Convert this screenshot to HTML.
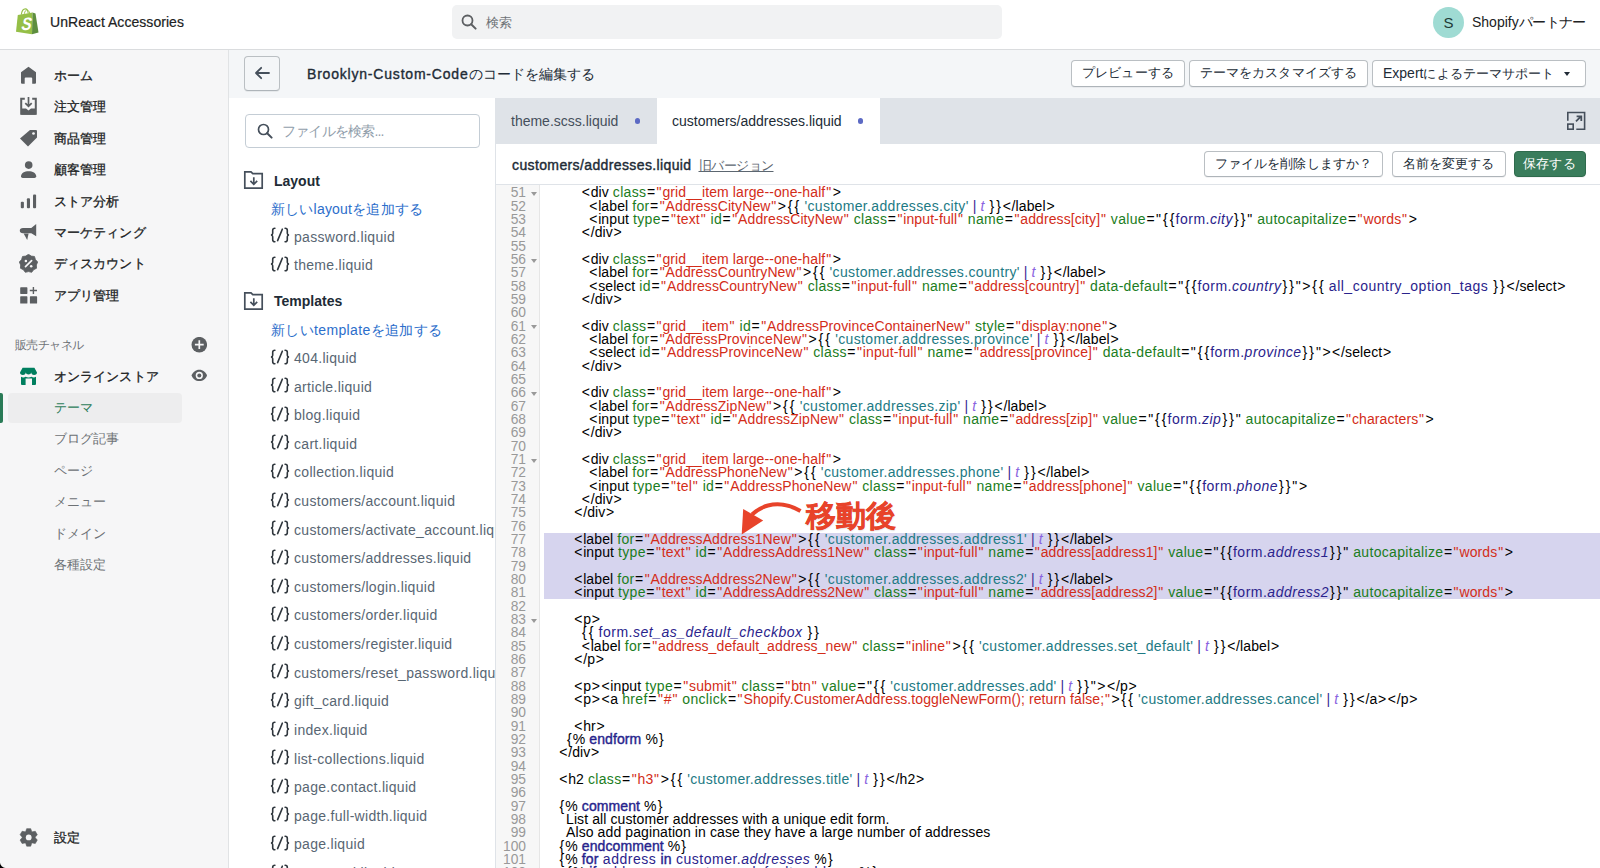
<!DOCTYPE html>
<html><head><meta charset="utf-8">
<style>
*{box-sizing:border-box;margin:0;padding:0}
html,body{width:1600px;height:868px;overflow:hidden;background:#fff;font-family:"Liberation Sans",sans-serif;color:#202223}
.abs{position:absolute}
/* top bar */
#top{position:absolute;left:0;top:0;width:1600px;height:50px;background:#fff;border-bottom:1px solid #dadcde;box-shadow:0 1px 1px rgba(0,0,0,.03)}
#search{position:absolute;left:452px;top:5px;width:550px;height:34px;background:#f1f2f3;border-radius:5px}
#search .txt{position:absolute;left:34px;top:9px;font-size:13px;color:#6d7175}
#avatar{position:absolute;left:1433px;top:6.5px;width:31px;height:31px;border-radius:50%;background:#9fdbd3;color:#1f3a36;font-size:15px;text-align:center;line-height:31px}
/* sidebar */
#side{position:absolute;left:0;top:50px;width:229px;height:818px;background:#f6f6f7;border-right:1px solid #e1e3e5}
.nav{position:absolute;left:54px;font-size:13px;font-weight:normal;-webkit-text-stroke:0.3px #202223;letter-spacing:0.1px;color:#202223;line-height:16px;margin-top:0.7px}
.sub{position:absolute;left:54px;font-size:13px;color:#6d7175;line-height:16px;letter-spacing:0.1px;margin-top:0.5px}
.ico{position:absolute;left:19px;width:20px;height:20px}
/* main header */
#hdr{position:absolute;left:229px;top:50px;width:1371px;height:48px;background:#f4f6f8}
.btn{position:absolute;height:27px;background:#fff;border:1px solid #babfc3;border-bottom-color:#aeb4b9;border-radius:4px;box-shadow:0 1px 0 rgba(22,29,37,.05);font-size:13px;color:#212b36;line-height:24px;text-align:center;white-space:nowrap;letter-spacing:0.05px}
/* file panel */
#files{position:absolute;left:229px;top:98px;width:266px;height:770px;background:#fff;overflow:hidden}
.fi{position:absolute;left:294px;font-size:14px;color:#586673;white-space:nowrap;line-height:16px;letter-spacing:0.3px}
.fi b{font-weight:normal;color:#212b36;font-size:14px;margin-right:4px}
/* editor */
#tabs{position:absolute;left:495px;top:98px;width:1105px;height:46px;background:#dfe3e8}
#edhdr{position:absolute;left:495px;top:144px;width:1105px;height:41px;background:#fff;border-bottom:1px solid #dfe3e8}
#edleft{position:absolute;left:495px;top:98px;width:1px;height:770px;background:#dfe3e8}
#gutter{position:absolute;left:496px;top:185px;width:44px;height:683px;background:#f7f7f7;border-right:1px solid #e6e6e6}
.ln{position:absolute;left:496px;width:30px;text-align:right;font-size:13.8px;color:#999;line-height:13.334px;height:13.334px}
.fold{position:absolute;left:531px;width:0;height:0;border-left:3.5px solid transparent;border-right:3.5px solid transparent;border-top:4px solid #999}
.cl{position:absolute;font-size:14px;line-height:13.334px;white-space:pre;color:#000;letter-spacing:0.1px}
.cl .a{color:#1b7d22;letter-spacing:0.33px}
.cl .s{color:#d32c18}
.cl .q{color:#1d7a84;letter-spacing:0.35px}
.cl .p{color:#3b2a94}
.cl .f{color:#8a63e0;font-style:italic}
.cl .v{color:#2a238c;letter-spacing:0.5px}
.cl .vi{color:#2a238c;font-style:italic;letter-spacing:0.5px}
.cl .k{color:#2a1f8f;-webkit-text-stroke:0.4px #24238a}
.cl i{font-style:inherit}
.cl .x1{padding:0 0.8px}
.cl .x2{padding:0 1.0px}
.cl .x3{padding:0 0.7px}
.cl .x4{padding:0 0.55px}
#hl{position:absolute;left:544px;top:532.8px;width:1056px;height:66.2px;background:#d6d4ee}
</style></head><body>

<!-- TOP BAR -->
<div id="top">
  <svg class="abs" style="left:15px;top:8px" width="25" height="28" viewBox="0 0 25 28">
    <path d="M2.8 7 L17.5 4.5 L17 26.2 L1 23.8 Z" fill="#95bf47"/>
    <path d="M17.5 4.5 L20.5 5.5 L23.5 24.5 L17 26.2 Z" fill="#5e8e3e"/>
    <path d="M6.3 6.8 C6.8 3 8.6 0.9 10.4 0.9 C12 0.9 12.9 2.4 13.2 5.2" fill="none" stroke="#95bf47" stroke-width="1.1"/>
    <path d="M9.3 5.8 C9.8 3.2 11 1.6 12.2 1.8" fill="none" stroke="#95bf47" stroke-width="0.9"/>
    <path d="M12.5 2.3 C13.6 2.5 14.3 3.5 14.6 5" fill="none" stroke="#95bf47" stroke-width="0.9"/>
    <text x="0" y="0" transform="translate(5.6 22) skewX(-14) scale(0.82 1)" font-family="Liberation Sans" font-weight="bold" font-size="18" fill="#fff">S</text>
  </svg>
  <div class="abs" style="left:50px;top:14px;font-size:14px;color:#202223;letter-spacing:0.05px;-webkit-text-stroke:0.2px #202223">UnReact Accessories</div>
  <div id="search">
    <svg class="abs" style="left:9px;top:9px" width="16" height="16" viewBox="0 0 16 16"><circle cx="6.5" cy="6.5" r="5" fill="none" stroke="#5c5f62" stroke-width="1.8"/><path d="M10.2 10.2 L14.6 14.6" stroke="#5c5f62" stroke-width="2" stroke-linecap="round"/></svg>
    <div class="txt">検索</div>
  </div>
  <div id="avatar">S</div>
  <div class="abs" style="left:1472px;top:14px;font-size:14px;color:#202223">Shopify<span style="letter-spacing:-0.6px">パートナー</span></div>
</div>

<!-- SIDEBAR -->
<div id="side"></div>
<svg class="ico" style="top:65px" viewBox="0 0 20 20"><path d="M9.5 1.7 L17 7.3 V17.7 Q17 18.7 16 18.7 H13.2 V13.5 Q13.2 12.5 12.2 12.5 H6.7 Q5.7 12.5 5.7 13.5 V18.7 H3 Q2 18.7 2 17.7 V7.3 Z" fill="#5c5f62"/></svg>
<svg class="ico" style="top:96px" viewBox="0 0 20 20"><path d="M5.8 2.7 H2.2 V17.8 H16.8 V2.7 H13.2" fill="none" stroke="#5c5f62" stroke-width="2"/><path d="M2.2 12.6 H7 L9.5 14.6 L12 12.6 H16.8 V18.8 H2.2 Z" fill="#5c5f62"/><path d="M9.5 1 V10.3 M6.3 7.2 L9.5 10.4 L12.7 7.2" stroke="#5c5f62" stroke-width="1.7" fill="none"/></svg>
<svg class="ico" style="top:128px" viewBox="0 0 20 20"><path d="M11 2 H17 Q18 2 18 3 V9.5 L9 18.5 L1 10.5 Z" fill="#5c5f62"/><circle cx="14.5" cy="5.5" r="1.35" fill="#f6f6f7"/></svg>
<svg class="ico" style="top:159px" viewBox="0 0 20 20"><circle cx="9.7" cy="6.1" r="3.8" fill="#5c5f62"/><path d="M2 17.3 C2 14.2 5.5 12.3 9.6 12.3 C13.7 12.3 17.2 14.2 17.2 17.3 Q17.2 19.1 15.5 19.1 H3.7 Q2 19.1 2 17.3 Z" fill="#5c5f62"/></svg>
<svg class="ico" style="top:191px" viewBox="0 0 20 20"><rect x="1.8" y="10.8" width="3.1" height="6.4" rx="1" fill="#5c5f62"/><rect x="7.9" y="7.2" width="3.1" height="10" rx="1" fill="#5c5f62"/><rect x="14" y="3.6" width="3.1" height="13.6" rx="1" fill="#5c5f62"/></svg>
<svg class="ico" style="top:222px" viewBox="0 0 20 20"><path d="M17.2 1.9 V14.3 L12.3 11.2 H4 Q0.8 11.2 0.8 8.6 Q0.8 6 4 6 H12.3 Z" fill="#5c5f62"/><path d="M4.6 11.6 H9.6 L8.2 18 Z" fill="#5c5f62"/></svg>
<svg class="ico" style="top:254px" viewBox="0 0 20 20"><path d="M9.50 0.30 L12.24 2.08 L15.48 2.48 L16.43 5.60 L18.66 7.99 L17.38 10.99 L17.55 14.25 L14.64 15.73 L12.68 18.34 L9.50 17.60 L6.32 18.34 L4.36 15.73 L1.45 14.25 L1.62 10.99 L0.34 7.99 L2.57 5.60 L3.52 2.48 L6.76 2.08Z" fill="#5c5f62" stroke="#5c5f62" stroke-width="0.8" stroke-linejoin="round"/><path d="M12.6 6.6 L6.5 12.6" stroke="#f6f6f7" stroke-width="1.7" stroke-linecap="round"/><circle cx="6.9" cy="7" r="1.25" fill="#f6f6f7"/><circle cx="12.2" cy="12.3" r="1.25" fill="#f6f6f7"/></svg>
<svg class="ico" style="top:286px" viewBox="0 0 20 20"><rect x="1.2" y="1.3" width="7.2" height="6.6" rx="0.6" fill="#5c5f62"/><rect x="1.2" y="10.3" width="7.2" height="7.3" rx="0.6" fill="#5c5f62"/><rect x="10.9" y="10.3" width="7.2" height="7.3" rx="0.6" fill="#5c5f62"/><path d="M14.4 0.9 V8.1 M10.8 4.5 H18" stroke="#5c5f62" stroke-width="1.4"/></svg>
<div class="nav" style="top:67px">ホーム</div>
<div class="nav" style="top:98px">注文管理</div>
<div class="nav" style="top:130px">商品管理</div>
<div class="nav" style="top:161px">顧客管理</div>
<div class="nav" style="top:193px">ストア分析</div>
<div class="nav" style="top:224px">マーケティング</div>
<div class="nav" style="top:255px">ディスカウント</div>
<div class="nav" style="top:287px">アプリ管理</div>
<div class="abs" style="left:15px;top:337px;font-size:12px;color:#6d7175;letter-spacing:-0.6px">販売チャネル</div>
<svg class="abs" style="left:191px;top:337px" width="16" height="16" viewBox="0 0 16 16"><circle cx="8.3" cy="7.7" r="7.8" fill="#5c5f62"/><path d="M8.3 3.3 V12.1 M3.9 7.7 H12.7" stroke="#f6f6f7" stroke-width="1.7"/></svg>
<svg class="ico" style="top:366px" viewBox="0 0 20 20"><path d="M3.6 1.8 H15.4 L18 6.6 A2.85 2.35 0 0 1 12.3 6.6 A2.85 2.35 0 0 1 6.7 6.6 A2.85 2.35 0 0 1 1 6.6 Z" fill="#007f5f"/><path d="M2 10.8 Q4.3 12 6.6 10.8 Q9.5 12.3 12.5 10.8 Q14.8 12 17 10.8 V17.9 Q17 18.9 16 18.9 H13 V12.6 H6.6 V18.9 H3 Q2 18.9 2 17.9 Z" fill="#007f5f"/></svg>
<div class="nav" style="top:368px">オンラインストア</div>
<svg class="abs" style="left:191px;top:368px" width="16" height="14" viewBox="0 0 16 14"><path d="M8.3 1.7 C4.5 1.7 1.8 4.3 0.6 7.4 C1.8 10.5 4.5 13.1 8.3 13.1 C12.1 13.1 14.8 10.5 16 7.4 C14.8 4.3 12.1 1.7 8.3 1.7 Z" fill="#5c5f62"/><circle cx="8.3" cy="7.4" r="3.6" fill="#f6f6f7"/><circle cx="8.3" cy="7.4" r="2" fill="#5c5f62"/></svg>
<div class="abs" style="left:8px;top:393px;width:174px;height:30px;background:#ededee;border-radius:4px"></div>
<div class="abs" style="left:0;top:393px;width:3px;height:30px;background:#2a7b57;border-radius:0 2px 2px 0"></div>
<div class="sub" style="top:399px;color:#2e7d5b">テーマ</div>
<div class="sub" style="top:430px">ブログ記事</div>
<div class="sub" style="top:462px">ページ</div>
<div class="sub" style="top:493px">メニュー</div>
<div class="sub" style="top:525px">ドメイン</div>
<div class="sub" style="top:556px">各種設定</div>
<svg class="ico" style="top:828px" viewBox="0 0 20 20"><path d="M6.72 3.51 L7.68 0.63 L11.72 0.63 L12.68 3.51 L13.31 3.87 L16.28 3.26 L18.31 6.77 L16.29 9.04 L16.29 9.76 L18.31 12.03 L16.28 15.54 L13.31 14.93 L12.68 15.29 L11.72 18.17 L7.68 18.17 L6.72 15.29 L6.09 14.93 L3.12 15.54 L1.09 12.03 L3.11 9.76 L3.11 9.04 L1.09 6.77 L3.12 3.26 L6.09 3.87Z" fill="#5c5f62" stroke="#5c5f62" stroke-width="0.6" stroke-linejoin="round"/><circle cx="9.7" cy="9.4" r="2.9" fill="#f6f6f7"/></svg>
<div class="nav" style="top:829px">設定</div>

<!-- MAIN HEADER -->
<div id="hdr"></div>
<div class="abs" style="left:244px;top:56px;width:36px;height:35px;border:1px solid #babfc3;border-bottom-color:#aeb4b9;border-radius:4px;background:#f4f6f8;box-shadow:0 1px 0 rgba(22,29,37,.06)"></div>
<svg class="abs" style="left:253px;top:64px" width="18" height="18" viewBox="0 0 18 18"><path d="M16 9 H3.2 M8.2 3.8 L3 9 L8.2 14.2" stroke="#454f5b" stroke-width="1.8" fill="none" stroke-linecap="round" stroke-linejoin="round"/></svg>
<div class="abs" style="left:307px;top:66px;font-size:14px;color:#212b36;white-space:nowrap"><span style="letter-spacing:0.8px;-webkit-text-stroke:0.35px #212b36">Brooklyn-Custom-Code</span>のコードを編集する</div>
<div class="btn" style="left:1071px;top:60px;width:114px;height:27px">プレビューする</div>
<div class="btn" style="left:1189px;top:60px;width:179px;height:27px">テーマをカスタマイズする</div>
<div class="btn" style="left:1372px;top:60px;width:214px;height:27px;text-align:left;padding-left:10px"><span style="letter-spacing:0;font-size:14px">Expert</span>によるテーマサポート<span style="position:absolute;left:191px;top:11px;width:0;height:0;border-left:3.5px solid transparent;border-right:3.5px solid transparent;border-top:4px solid #212b36"></span></div>

<!-- FILE PANEL -->
<div id="files"></div>
<div class="abs" style="left:245px;top:114px;width:235px;height:34px;border:1px solid #c4cdd5;border-radius:4px"></div>
<svg class="abs" style="left:257px;top:123px" width="16" height="16" viewBox="0 0 16 16"><circle cx="6.5" cy="6.5" r="5" fill="none" stroke="#454f5b" stroke-width="1.7"/><path d="M10.2 10.2 L14.6 14.6" stroke="#454f5b" stroke-width="2" stroke-linecap="round"/></svg>
<div class="abs" style="left:282px;top:123px;font-size:14px;color:#919eab;letter-spacing:-0.8px">ファイルを検索...</div>
<svg class="abs" style="left:243px;top:170px" width="21" height="20" viewBox="0 0 21 20"><path d="M1.8 1.8 H8 L9.8 3.6 H19.2 V18.2 H1.8 Z" fill="none" stroke="#454f5b" stroke-width="1.7"/><path d="M10.8 7.2 V14.2 M7.4 10.9 L10.8 14.3 L14.2 10.9" stroke="#454f5b" stroke-width="1.7" fill="none"/></svg>
<div class="abs" style="left:274px;top:172.5px;font-size:14px;font-weight:bold;color:#212b36">Layout</div>
<div class="fi" style="left:271px;top:201px;color:#2c6ecb;letter-spacing:0.2px">新しいlayoutを追加する</div>
<svg class="abs" style="left:243px;top:291px" width="21" height="20" viewBox="0 0 21 20"><path d="M1.8 1.8 H8 L9.8 3.6 H19.2 V18.2 H1.8 Z" fill="none" stroke="#454f5b" stroke-width="1.7"/><path d="M10.8 7.2 V14.2 M7.4 10.9 L10.8 14.3 L14.2 10.9" stroke="#454f5b" stroke-width="1.7" fill="none"/></svg>
<div class="abs" style="left:274px;top:293px;font-size:14px;font-weight:bold;color:#212b36">Templates</div>
<div class="fi" style="left:271px;top:321.5px;color:#2c6ecb;letter-spacing:0.35px">新しいtemplateを追加する</div>
<svg class="abs" style="left:270px;top:227.25px" width="20" height="16" viewBox="0 0 20 16"><path d="M4.9 1.2 Q2.7 1.2 2.7 3.2 V6.2 Q2.7 7.8 1 8 Q2.7 8.2 2.7 9.8 V12.8 Q2.7 14.8 4.9 14.8 M12.3 2.2 L7.6 13.6 M15.1 1.2 Q17.3 1.2 17.3 3.2 V6.2 Q17.3 7.8 19 8 Q17.3 8.2 17.3 9.8 V12.8 Q17.3 14.8 15.1 14.8" fill="none" stroke="#2f363d" stroke-width="1.6" stroke-linecap="round"/></svg><div class="fi" style="top:228.60px">password.liquid</div>
<svg class="abs" style="left:270px;top:255.95px" width="20" height="16" viewBox="0 0 20 16"><path d="M4.9 1.2 Q2.7 1.2 2.7 3.2 V6.2 Q2.7 7.8 1 8 Q2.7 8.2 2.7 9.8 V12.8 Q2.7 14.8 4.9 14.8 M12.3 2.2 L7.6 13.6 M15.1 1.2 Q17.3 1.2 17.3 3.2 V6.2 Q17.3 7.8 19 8 Q17.3 8.2 17.3 9.8 V12.8 Q17.3 14.8 15.1 14.8" fill="none" stroke="#2f363d" stroke-width="1.6" stroke-linecap="round"/></svg><div class="fi" style="top:257.30px">theme.liquid</div>
<svg class="abs" style="left:270px;top:348.55px" width="20" height="16" viewBox="0 0 20 16"><path d="M4.9 1.2 Q2.7 1.2 2.7 3.2 V6.2 Q2.7 7.8 1 8 Q2.7 8.2 2.7 9.8 V12.8 Q2.7 14.8 4.9 14.8 M12.3 2.2 L7.6 13.6 M15.1 1.2 Q17.3 1.2 17.3 3.2 V6.2 Q17.3 7.8 19 8 Q17.3 8.2 17.3 9.8 V12.8 Q17.3 14.8 15.1 14.8" fill="none" stroke="#2f363d" stroke-width="1.6" stroke-linecap="round"/></svg><div class="fi" style="top:349.90px">404.liquid</div>
<svg class="abs" style="left:270px;top:377.17px" width="20" height="16" viewBox="0 0 20 16"><path d="M4.9 1.2 Q2.7 1.2 2.7 3.2 V6.2 Q2.7 7.8 1 8 Q2.7 8.2 2.7 9.8 V12.8 Q2.7 14.8 4.9 14.8 M12.3 2.2 L7.6 13.6 M15.1 1.2 Q17.3 1.2 17.3 3.2 V6.2 Q17.3 7.8 19 8 Q17.3 8.2 17.3 9.8 V12.8 Q17.3 14.8 15.1 14.8" fill="none" stroke="#2f363d" stroke-width="1.6" stroke-linecap="round"/></svg><div class="fi" style="top:378.52px">article.liquid</div>
<svg class="abs" style="left:270px;top:405.79px" width="20" height="16" viewBox="0 0 20 16"><path d="M4.9 1.2 Q2.7 1.2 2.7 3.2 V6.2 Q2.7 7.8 1 8 Q2.7 8.2 2.7 9.8 V12.8 Q2.7 14.8 4.9 14.8 M12.3 2.2 L7.6 13.6 M15.1 1.2 Q17.3 1.2 17.3 3.2 V6.2 Q17.3 7.8 19 8 Q17.3 8.2 17.3 9.8 V12.8 Q17.3 14.8 15.1 14.8" fill="none" stroke="#2f363d" stroke-width="1.6" stroke-linecap="round"/></svg><div class="fi" style="top:407.14px">blog.liquid</div>
<svg class="abs" style="left:270px;top:434.41px" width="20" height="16" viewBox="0 0 20 16"><path d="M4.9 1.2 Q2.7 1.2 2.7 3.2 V6.2 Q2.7 7.8 1 8 Q2.7 8.2 2.7 9.8 V12.8 Q2.7 14.8 4.9 14.8 M12.3 2.2 L7.6 13.6 M15.1 1.2 Q17.3 1.2 17.3 3.2 V6.2 Q17.3 7.8 19 8 Q17.3 8.2 17.3 9.8 V12.8 Q17.3 14.8 15.1 14.8" fill="none" stroke="#2f363d" stroke-width="1.6" stroke-linecap="round"/></svg><div class="fi" style="top:435.76px">cart.liquid</div>
<svg class="abs" style="left:270px;top:463.03px" width="20" height="16" viewBox="0 0 20 16"><path d="M4.9 1.2 Q2.7 1.2 2.7 3.2 V6.2 Q2.7 7.8 1 8 Q2.7 8.2 2.7 9.8 V12.8 Q2.7 14.8 4.9 14.8 M12.3 2.2 L7.6 13.6 M15.1 1.2 Q17.3 1.2 17.3 3.2 V6.2 Q17.3 7.8 19 8 Q17.3 8.2 17.3 9.8 V12.8 Q17.3 14.8 15.1 14.8" fill="none" stroke="#2f363d" stroke-width="1.6" stroke-linecap="round"/></svg><div class="fi" style="top:464.38px">collection.liquid</div>
<svg class="abs" style="left:270px;top:491.65px" width="20" height="16" viewBox="0 0 20 16"><path d="M4.9 1.2 Q2.7 1.2 2.7 3.2 V6.2 Q2.7 7.8 1 8 Q2.7 8.2 2.7 9.8 V12.8 Q2.7 14.8 4.9 14.8 M12.3 2.2 L7.6 13.6 M15.1 1.2 Q17.3 1.2 17.3 3.2 V6.2 Q17.3 7.8 19 8 Q17.3 8.2 17.3 9.8 V12.8 Q17.3 14.8 15.1 14.8" fill="none" stroke="#2f363d" stroke-width="1.6" stroke-linecap="round"/></svg><div class="fi" style="top:493.00px">customers/account.liquid</div>
<svg class="abs" style="left:270px;top:520.27px" width="20" height="16" viewBox="0 0 20 16"><path d="M4.9 1.2 Q2.7 1.2 2.7 3.2 V6.2 Q2.7 7.8 1 8 Q2.7 8.2 2.7 9.8 V12.8 Q2.7 14.8 4.9 14.8 M12.3 2.2 L7.6 13.6 M15.1 1.2 Q17.3 1.2 17.3 3.2 V6.2 Q17.3 7.8 19 8 Q17.3 8.2 17.3 9.8 V12.8 Q17.3 14.8 15.1 14.8" fill="none" stroke="#2f363d" stroke-width="1.6" stroke-linecap="round"/></svg><div class="fi" style="top:521.62px">customers/activate_account.liquid</div>
<svg class="abs" style="left:270px;top:548.89px" width="20" height="16" viewBox="0 0 20 16"><path d="M4.9 1.2 Q2.7 1.2 2.7 3.2 V6.2 Q2.7 7.8 1 8 Q2.7 8.2 2.7 9.8 V12.8 Q2.7 14.8 4.9 14.8 M12.3 2.2 L7.6 13.6 M15.1 1.2 Q17.3 1.2 17.3 3.2 V6.2 Q17.3 7.8 19 8 Q17.3 8.2 17.3 9.8 V12.8 Q17.3 14.8 15.1 14.8" fill="none" stroke="#2f363d" stroke-width="1.6" stroke-linecap="round"/></svg><div class="fi" style="top:550.24px">customers/addresses.liquid</div>
<svg class="abs" style="left:270px;top:577.51px" width="20" height="16" viewBox="0 0 20 16"><path d="M4.9 1.2 Q2.7 1.2 2.7 3.2 V6.2 Q2.7 7.8 1 8 Q2.7 8.2 2.7 9.8 V12.8 Q2.7 14.8 4.9 14.8 M12.3 2.2 L7.6 13.6 M15.1 1.2 Q17.3 1.2 17.3 3.2 V6.2 Q17.3 7.8 19 8 Q17.3 8.2 17.3 9.8 V12.8 Q17.3 14.8 15.1 14.8" fill="none" stroke="#2f363d" stroke-width="1.6" stroke-linecap="round"/></svg><div class="fi" style="top:578.86px">customers/login.liquid</div>
<svg class="abs" style="left:270px;top:606.13px" width="20" height="16" viewBox="0 0 20 16"><path d="M4.9 1.2 Q2.7 1.2 2.7 3.2 V6.2 Q2.7 7.8 1 8 Q2.7 8.2 2.7 9.8 V12.8 Q2.7 14.8 4.9 14.8 M12.3 2.2 L7.6 13.6 M15.1 1.2 Q17.3 1.2 17.3 3.2 V6.2 Q17.3 7.8 19 8 Q17.3 8.2 17.3 9.8 V12.8 Q17.3 14.8 15.1 14.8" fill="none" stroke="#2f363d" stroke-width="1.6" stroke-linecap="round"/></svg><div class="fi" style="top:607.48px">customers/order.liquid</div>
<svg class="abs" style="left:270px;top:634.75px" width="20" height="16" viewBox="0 0 20 16"><path d="M4.9 1.2 Q2.7 1.2 2.7 3.2 V6.2 Q2.7 7.8 1 8 Q2.7 8.2 2.7 9.8 V12.8 Q2.7 14.8 4.9 14.8 M12.3 2.2 L7.6 13.6 M15.1 1.2 Q17.3 1.2 17.3 3.2 V6.2 Q17.3 7.8 19 8 Q17.3 8.2 17.3 9.8 V12.8 Q17.3 14.8 15.1 14.8" fill="none" stroke="#2f363d" stroke-width="1.6" stroke-linecap="round"/></svg><div class="fi" style="top:636.10px">customers/register.liquid</div>
<svg class="abs" style="left:270px;top:663.37px" width="20" height="16" viewBox="0 0 20 16"><path d="M4.9 1.2 Q2.7 1.2 2.7 3.2 V6.2 Q2.7 7.8 1 8 Q2.7 8.2 2.7 9.8 V12.8 Q2.7 14.8 4.9 14.8 M12.3 2.2 L7.6 13.6 M15.1 1.2 Q17.3 1.2 17.3 3.2 V6.2 Q17.3 7.8 19 8 Q17.3 8.2 17.3 9.8 V12.8 Q17.3 14.8 15.1 14.8" fill="none" stroke="#2f363d" stroke-width="1.6" stroke-linecap="round"/></svg><div class="fi" style="top:664.72px">customers/reset_password.liquid</div>
<svg class="abs" style="left:270px;top:691.99px" width="20" height="16" viewBox="0 0 20 16"><path d="M4.9 1.2 Q2.7 1.2 2.7 3.2 V6.2 Q2.7 7.8 1 8 Q2.7 8.2 2.7 9.8 V12.8 Q2.7 14.8 4.9 14.8 M12.3 2.2 L7.6 13.6 M15.1 1.2 Q17.3 1.2 17.3 3.2 V6.2 Q17.3 7.8 19 8 Q17.3 8.2 17.3 9.8 V12.8 Q17.3 14.8 15.1 14.8" fill="none" stroke="#2f363d" stroke-width="1.6" stroke-linecap="round"/></svg><div class="fi" style="top:693.34px">gift_card.liquid</div>
<svg class="abs" style="left:270px;top:720.61px" width="20" height="16" viewBox="0 0 20 16"><path d="M4.9 1.2 Q2.7 1.2 2.7 3.2 V6.2 Q2.7 7.8 1 8 Q2.7 8.2 2.7 9.8 V12.8 Q2.7 14.8 4.9 14.8 M12.3 2.2 L7.6 13.6 M15.1 1.2 Q17.3 1.2 17.3 3.2 V6.2 Q17.3 7.8 19 8 Q17.3 8.2 17.3 9.8 V12.8 Q17.3 14.8 15.1 14.8" fill="none" stroke="#2f363d" stroke-width="1.6" stroke-linecap="round"/></svg><div class="fi" style="top:721.96px">index.liquid</div>
<svg class="abs" style="left:270px;top:749.23px" width="20" height="16" viewBox="0 0 20 16"><path d="M4.9 1.2 Q2.7 1.2 2.7 3.2 V6.2 Q2.7 7.8 1 8 Q2.7 8.2 2.7 9.8 V12.8 Q2.7 14.8 4.9 14.8 M12.3 2.2 L7.6 13.6 M15.1 1.2 Q17.3 1.2 17.3 3.2 V6.2 Q17.3 7.8 19 8 Q17.3 8.2 17.3 9.8 V12.8 Q17.3 14.8 15.1 14.8" fill="none" stroke="#2f363d" stroke-width="1.6" stroke-linecap="round"/></svg><div class="fi" style="top:750.58px">list-collections.liquid</div>
<svg class="abs" style="left:270px;top:777.85px" width="20" height="16" viewBox="0 0 20 16"><path d="M4.9 1.2 Q2.7 1.2 2.7 3.2 V6.2 Q2.7 7.8 1 8 Q2.7 8.2 2.7 9.8 V12.8 Q2.7 14.8 4.9 14.8 M12.3 2.2 L7.6 13.6 M15.1 1.2 Q17.3 1.2 17.3 3.2 V6.2 Q17.3 7.8 19 8 Q17.3 8.2 17.3 9.8 V12.8 Q17.3 14.8 15.1 14.8" fill="none" stroke="#2f363d" stroke-width="1.6" stroke-linecap="round"/></svg><div class="fi" style="top:779.20px">page.contact.liquid</div>
<svg class="abs" style="left:270px;top:806.47px" width="20" height="16" viewBox="0 0 20 16"><path d="M4.9 1.2 Q2.7 1.2 2.7 3.2 V6.2 Q2.7 7.8 1 8 Q2.7 8.2 2.7 9.8 V12.8 Q2.7 14.8 4.9 14.8 M12.3 2.2 L7.6 13.6 M15.1 1.2 Q17.3 1.2 17.3 3.2 V6.2 Q17.3 7.8 19 8 Q17.3 8.2 17.3 9.8 V12.8 Q17.3 14.8 15.1 14.8" fill="none" stroke="#2f363d" stroke-width="1.6" stroke-linecap="round"/></svg><div class="fi" style="top:807.82px">page.full-width.liquid</div>
<svg class="abs" style="left:270px;top:835.09px" width="20" height="16" viewBox="0 0 20 16"><path d="M4.9 1.2 Q2.7 1.2 2.7 3.2 V6.2 Q2.7 7.8 1 8 Q2.7 8.2 2.7 9.8 V12.8 Q2.7 14.8 4.9 14.8 M12.3 2.2 L7.6 13.6 M15.1 1.2 Q17.3 1.2 17.3 3.2 V6.2 Q17.3 7.8 19 8 Q17.3 8.2 17.3 9.8 V12.8 Q17.3 14.8 15.1 14.8" fill="none" stroke="#2f363d" stroke-width="1.6" stroke-linecap="round"/></svg><div class="fi" style="top:836.44px">page.liquid</div>
<svg class="abs" style="left:270px;top:863.71px" width="20" height="16" viewBox="0 0 20 16"><path d="M4.9 1.2 Q2.7 1.2 2.7 3.2 V6.2 Q2.7 7.8 1 8 Q2.7 8.2 2.7 9.8 V12.8 Q2.7 14.8 4.9 14.8 M12.3 2.2 L7.6 13.6 M15.1 1.2 Q17.3 1.2 17.3 3.2 V6.2 Q17.3 7.8 19 8 Q17.3 8.2 17.3 9.8 V12.8 Q17.3 14.8 15.1 14.8" fill="none" stroke="#2f363d" stroke-width="1.6" stroke-linecap="round"/></svg><div class="fi" style="top:865.06px">password.liquid</div>

<!-- EDITOR -->
<div id="tabs">
  <div class="abs" style="left:162px;top:0;width:223px;height:46px;background:#fff"></div>
  <div class="abs" style="left:16px;top:15px;font-size:14px;color:#454f5b">theme.scss.liquid</div>
  <div class="abs" style="left:139.8px;top:20.1px;width:5.6px;height:5.6px;border-radius:50%;background:#5c6ac4"></div>
  <div class="abs" style="left:177px;top:15px;font-size:14px;color:#212b36">customers/addresses.liquid</div>
  <div class="abs" style="left:362.6px;top:20.1px;width:5.6px;height:5.6px;border-radius:50%;background:#5c6ac4"></div>
  <svg class="abs" style="left:1071px;top:13px" width="20" height="20" viewBox="0 0 20 20"><path d="M1.8 9.7 V1.5 H18.6 V18.2 H10.3" fill="none" stroke="#454f5b" stroke-width="1.6"/><rect x="1.8" y="13.1" width="5.4" height="5.1" fill="none" stroke="#454f5b" stroke-width="1.6"/><path d="M10 10.4 L15.2 5.2 M10.6 5.3 H15.3 V10" fill="none" stroke="#454f5b" stroke-width="1.8"/></svg>
</div>
<div id="edhdr">
  <div class="abs" style="left:17px;top:13px;font-size:14px;color:#212b36;letter-spacing:0.38px;-webkit-text-stroke:0.4px #212b36">customers/addresses.liquid</div>
  <div class="abs" style="left:203.5px;top:13px;font-size:13px;color:#5c6670;letter-spacing:-0.5px;text-decoration:underline;text-underline-offset:1px">旧バージョン</div>
</div>
<div class="btn" style="left:1204px;top:151px;width:179px;height:26px">ファイルを削除しますか？</div>
<div class="btn" style="left:1391.5px;top:151px;width:114px;height:26px">名前を変更する</div>
<div class="btn" style="left:1513.5px;top:151px;width:72px;height:26px;background:#3a7d5c;border-color:#2f6b4d;color:#fff">保存する</div>
<div id="edleft"></div>
<div id="gutter"></div>
<div id="hl"></div>
<div class="ln" style="top:186.40px">51</div>
<div class="fold" style="top:191.90px"></div>
<div class="cl" style="top:186.40px;left:581.00px"><i class="x3">&lt;</i>div <span class="a">class</span><i class="x4">=</i><span class="s"><i class="x1">"</i>grid__item large--one-half<i class="x1">"</i></span><i class="x3">&gt;</i></div>
<div class="ln" style="top:199.73px">52</div>
<div class="cl" style="top:199.73px;left:588.50px"><i class="x3">&lt;</i>label <span class="a">for</span><i class="x4">=</i><span class="s"><i class="x1">"</i>AddressCityNew<i class="x1">"</i></span><i class="x3">&gt;</i><i class="x2">{</i><i class="x2">{</i> <span class="q">'customer.addresses.city'</span><span class="p"> | </span><span class="f">t</span> <i class="x2">}</i><i class="x2">}</i><i class="x3">&lt;</i>/label<i class="x3">&gt;</i></div>
<div class="ln" style="top:213.07px">53</div>
<div class="cl" style="top:213.07px;left:588.50px"><i class="x3">&lt;</i>input <span class="a">type</span><i class="x4">=</i><span class="s"><i class="x1">"</i>text<i class="x1">"</i></span> <span class="a">id</span><i class="x4">=</i><span class="s"><i class="x1">"</i>AddressCityNew<i class="x1">"</i></span> <span class="a">class</span><i class="x4">=</i><span class="s"><i class="x1">"</i>input-full<i class="x1">"</i></span> <span class="a">name</span><i class="x4">=</i><span class="s"><i class="x1">"</i>address[city]<i class="x1">"</i></span> <span class="a">value</span><i class="x4">=</i><i class="x1">"</i><i class="x2">{</i><i class="x2">{</i><span class="v">form.</span><span class="vi">city</span><i class="x2">}</i><i class="x2">}</i><i class="x1">"</i> <span class="a">autocapitalize</span><i class="x4">=</i><span class="s"><i class="x1">"</i>words<i class="x1">"</i></span><i class="x3">&gt;</i></div>
<div class="ln" style="top:226.40px">54</div>
<div class="cl" style="top:226.40px;left:581.00px"><i class="x3">&lt;</i>/div<i class="x3">&gt;</i></div>
<div class="ln" style="top:239.74px">55</div>
<div class="ln" style="top:253.07px">56</div>
<div class="fold" style="top:258.57px"></div>
<div class="cl" style="top:253.07px;left:581.00px"><i class="x3">&lt;</i>div <span class="a">class</span><i class="x4">=</i><span class="s"><i class="x1">"</i>grid__item large--one-half<i class="x1">"</i></span><i class="x3">&gt;</i></div>
<div class="ln" style="top:266.40px">57</div>
<div class="cl" style="top:266.40px;left:588.50px"><i class="x3">&lt;</i>label <span class="a">for</span><i class="x4">=</i><span class="s"><i class="x1">"</i>AddressCountryNew<i class="x1">"</i></span><i class="x3">&gt;</i><i class="x2">{</i><i class="x2">{</i> <span class="q">'customer.addresses.country'</span><span class="p"> | </span><span class="f">t</span> <i class="x2">}</i><i class="x2">}</i><i class="x3">&lt;</i>/label<i class="x3">&gt;</i></div>
<div class="ln" style="top:279.74px">58</div>
<div class="cl" style="top:279.74px;left:588.50px"><i class="x3">&lt;</i>select <span class="a">id</span><i class="x4">=</i><span class="s"><i class="x1">"</i>AddressCountryNew<i class="x1">"</i></span> <span class="a">class</span><i class="x4">=</i><span class="s"><i class="x1">"</i>input-full<i class="x1">"</i></span> <span class="a">name</span><i class="x4">=</i><span class="s"><i class="x1">"</i>address[country]<i class="x1">"</i></span> <span class="a">data-default</span><i class="x4">=</i><i class="x1">"</i><i class="x2">{</i><i class="x2">{</i><span class="v">form.</span><span class="vi">country</span><i class="x2">}</i><i class="x2">}</i><i class="x1">"</i><i class="x3">&gt;</i><i class="x2">{</i><i class="x2">{</i> <span class="v">all_country_option_tags</span> <i class="x2">}</i><i class="x2">}</i><i class="x3">&lt;</i>/select<i class="x3">&gt;</i></div>
<div class="ln" style="top:293.07px">59</div>
<div class="cl" style="top:293.07px;left:581.00px"><i class="x3">&lt;</i>/div<i class="x3">&gt;</i></div>
<div class="ln" style="top:306.41px">60</div>
<div class="ln" style="top:319.74px">61</div>
<div class="fold" style="top:325.24px"></div>
<div class="cl" style="top:319.74px;left:581.00px"><i class="x3">&lt;</i>div <span class="a">class</span><i class="x4">=</i><span class="s"><i class="x1">"</i>grid__item<i class="x1">"</i></span> <span class="a">id</span><i class="x4">=</i><span class="s"><i class="x1">"</i>AddressProvinceContainerNew<i class="x1">"</i></span> <span class="a">style</span><i class="x4">=</i><span class="s"><i class="x1">"</i>display:none<i class="x1">"</i></span><i class="x3">&gt;</i></div>
<div class="ln" style="top:333.07px">62</div>
<div class="cl" style="top:333.07px;left:588.50px"><i class="x3">&lt;</i>label <span class="a">for</span><i class="x4">=</i><span class="s"><i class="x1">"</i>AddressProvinceNew<i class="x1">"</i></span><i class="x3">&gt;</i><i class="x2">{</i><i class="x2">{</i> <span class="q">'customer.addresses.province'</span><span class="p"> | </span><span class="f">t</span> <i class="x2">}</i><i class="x2">}</i><i class="x3">&lt;</i>/label<i class="x3">&gt;</i></div>
<div class="ln" style="top:346.41px">63</div>
<div class="cl" style="top:346.41px;left:588.50px"><i class="x3">&lt;</i>select <span class="a">id</span><i class="x4">=</i><span class="s"><i class="x1">"</i>AddressProvinceNew<i class="x1">"</i></span> <span class="a">class</span><i class="x4">=</i><span class="s"><i class="x1">"</i>input-full<i class="x1">"</i></span> <span class="a">name</span><i class="x4">=</i><span class="s"><i class="x1">"</i>address[province]<i class="x1">"</i></span> <span class="a">data-default</span><i class="x4">=</i><i class="x1">"</i><i class="x2">{</i><i class="x2">{</i><span class="v">form.</span><span class="vi">province</span><i class="x2">}</i><i class="x2">}</i><i class="x1">"</i><i class="x3">&gt;</i><i class="x3">&lt;</i>/select<i class="x3">&gt;</i></div>
<div class="ln" style="top:359.74px">64</div>
<div class="cl" style="top:359.74px;left:581.00px"><i class="x3">&lt;</i>/div<i class="x3">&gt;</i></div>
<div class="ln" style="top:373.08px">65</div>
<div class="ln" style="top:386.41px">66</div>
<div class="fold" style="top:391.91px"></div>
<div class="cl" style="top:386.41px;left:581.00px"><i class="x3">&lt;</i>div <span class="a">class</span><i class="x4">=</i><span class="s"><i class="x1">"</i>grid__item large--one-half<i class="x1">"</i></span><i class="x3">&gt;</i></div>
<div class="ln" style="top:399.74px">67</div>
<div class="cl" style="top:399.74px;left:588.50px"><i class="x3">&lt;</i>label <span class="a">for</span><i class="x4">=</i><span class="s"><i class="x1">"</i>AddressZipNew<i class="x1">"</i></span><i class="x3">&gt;</i><i class="x2">{</i><i class="x2">{</i> <span class="q">'customer.addresses.zip'</span><span class="p"> | </span><span class="f">t</span> <i class="x2">}</i><i class="x2">}</i><i class="x3">&lt;</i>/label<i class="x3">&gt;</i></div>
<div class="ln" style="top:413.08px">68</div>
<div class="cl" style="top:413.08px;left:588.50px"><i class="x3">&lt;</i>input <span class="a">type</span><i class="x4">=</i><span class="s"><i class="x1">"</i>text<i class="x1">"</i></span> <span class="a">id</span><i class="x4">=</i><span class="s"><i class="x1">"</i>AddressZipNew<i class="x1">"</i></span> <span class="a">class</span><i class="x4">=</i><span class="s"><i class="x1">"</i>input-full<i class="x1">"</i></span> <span class="a">name</span><i class="x4">=</i><span class="s"><i class="x1">"</i>address[zip]<i class="x1">"</i></span> <span class="a">value</span><i class="x4">=</i><i class="x1">"</i><i class="x2">{</i><i class="x2">{</i><span class="v">form.</span><span class="vi">zip</span><i class="x2">}</i><i class="x2">}</i><i class="x1">"</i> <span class="a">autocapitalize</span><i class="x4">=</i><span class="s"><i class="x1">"</i>characters<i class="x1">"</i></span><i class="x3">&gt;</i></div>
<div class="ln" style="top:426.41px">69</div>
<div class="cl" style="top:426.41px;left:581.00px"><i class="x3">&lt;</i>/div<i class="x3">&gt;</i></div>
<div class="ln" style="top:439.75px">70</div>
<div class="ln" style="top:453.08px">71</div>
<div class="fold" style="top:458.58px"></div>
<div class="cl" style="top:453.08px;left:581.00px"><i class="x3">&lt;</i>div <span class="a">class</span><i class="x4">=</i><span class="s"><i class="x1">"</i>grid__item large--one-half<i class="x1">"</i></span><i class="x3">&gt;</i></div>
<div class="ln" style="top:466.41px">72</div>
<div class="cl" style="top:466.41px;left:588.50px"><i class="x3">&lt;</i>label <span class="a">for</span><i class="x4">=</i><span class="s"><i class="x1">"</i>AddressPhoneNew<i class="x1">"</i></span><i class="x3">&gt;</i><i class="x2">{</i><i class="x2">{</i> <span class="q">'customer.addresses.phone'</span><span class="p"> | </span><span class="f">t</span> <i class="x2">}</i><i class="x2">}</i><i class="x3">&lt;</i>/label<i class="x3">&gt;</i></div>
<div class="ln" style="top:479.75px">73</div>
<div class="cl" style="top:479.75px;left:588.50px"><i class="x3">&lt;</i>input <span class="a">type</span><i class="x4">=</i><span class="s"><i class="x1">"</i>tel<i class="x1">"</i></span> <span class="a">id</span><i class="x4">=</i><span class="s"><i class="x1">"</i>AddressPhoneNew<i class="x1">"</i></span> <span class="a">class</span><i class="x4">=</i><span class="s"><i class="x1">"</i>input-full<i class="x1">"</i></span> <span class="a">name</span><i class="x4">=</i><span class="s"><i class="x1">"</i>address[phone]<i class="x1">"</i></span> <span class="a">value</span><i class="x4">=</i><i class="x1">"</i><i class="x2">{</i><i class="x2">{</i><span class="v">form.</span><span class="vi">phone</span><i class="x2">}</i><i class="x2">}</i><i class="x1">"</i><i class="x3">&gt;</i></div>
<div class="ln" style="top:493.08px">74</div>
<div class="cl" style="top:493.08px;left:581.00px"><i class="x3">&lt;</i>/div<i class="x3">&gt;</i></div>
<div class="ln" style="top:506.42px">75</div>
<div class="cl" style="top:506.42px;left:573.50px"><i class="x3">&lt;</i>/div<i class="x3">&gt;</i></div>
<div class="ln" style="top:519.75px">76</div>
<div class="ln" style="top:533.08px">77</div>
<div class="cl" style="top:533.08px;left:573.50px"><i class="x3">&lt;</i>label <span class="a">for</span><i class="x4">=</i><span class="s"><i class="x1">"</i>AddressAddress1New<i class="x1">"</i></span><i class="x3">&gt;</i><i class="x2">{</i><i class="x2">{</i> <span class="q">'customer.addresses.address1'</span><span class="p"> | </span><span class="f">t</span> <i class="x2">}</i><i class="x2">}</i><i class="x3">&lt;</i>/label<i class="x3">&gt;</i></div>
<div class="ln" style="top:546.42px">78</div>
<div class="cl" style="top:546.42px;left:573.50px"><i class="x3">&lt;</i>input <span class="a">type</span><i class="x4">=</i><span class="s"><i class="x1">"</i>text<i class="x1">"</i></span> <span class="a">id</span><i class="x4">=</i><span class="s"><i class="x1">"</i>AddressAddress1New<i class="x1">"</i></span> <span class="a">class</span><i class="x4">=</i><span class="s"><i class="x1">"</i>input-full<i class="x1">"</i></span> <span class="a">name</span><i class="x4">=</i><span class="s"><i class="x1">"</i>address[address1]<i class="x1">"</i></span> <span class="a">value</span><i class="x4">=</i><i class="x1">"</i><i class="x2">{</i><i class="x2">{</i><span class="v">form.</span><span class="vi">address1</span><i class="x2">}</i><i class="x2">}</i><i class="x1">"</i> <span class="a">autocapitalize</span><i class="x4">=</i><span class="s"><i class="x1">"</i>words<i class="x1">"</i></span><i class="x3">&gt;</i></div>
<div class="ln" style="top:559.75px">79</div>
<div class="ln" style="top:573.09px">80</div>
<div class="cl" style="top:573.09px;left:573.50px"><i class="x3">&lt;</i>label <span class="a">for</span><i class="x4">=</i><span class="s"><i class="x1">"</i>AddressAddress2New<i class="x1">"</i></span><i class="x3">&gt;</i><i class="x2">{</i><i class="x2">{</i> <span class="q">'customer.addresses.address2'</span><span class="p"> | </span><span class="f">t</span> <i class="x2">}</i><i class="x2">}</i><i class="x3">&lt;</i>/label<i class="x3">&gt;</i></div>
<div class="ln" style="top:586.42px">81</div>
<div class="cl" style="top:586.42px;left:573.50px"><i class="x3">&lt;</i>input <span class="a">type</span><i class="x4">=</i><span class="s"><i class="x1">"</i>text<i class="x1">"</i></span> <span class="a">id</span><i class="x4">=</i><span class="s"><i class="x1">"</i>AddressAddress2New<i class="x1">"</i></span> <span class="a">class</span><i class="x4">=</i><span class="s"><i class="x1">"</i>input-full<i class="x1">"</i></span> <span class="a">name</span><i class="x4">=</i><span class="s"><i class="x1">"</i>address[address2]<i class="x1">"</i></span> <span class="a">value</span><i class="x4">=</i><i class="x1">"</i><i class="x2">{</i><i class="x2">{</i><span class="v">form.</span><span class="vi">address2</span><i class="x2">}</i><i class="x2">}</i><i class="x1">"</i> <span class="a">autocapitalize</span><i class="x4">=</i><span class="s"><i class="x1">"</i>words<i class="x1">"</i></span><i class="x3">&gt;</i></div>
<div class="ln" style="top:599.75px">82</div>
<div class="ln" style="top:613.09px">83</div>
<div class="fold" style="top:618.59px"></div>
<div class="cl" style="top:613.09px;left:573.50px"><i class="x3">&lt;</i>p<i class="x3">&gt;</i></div>
<div class="ln" style="top:626.42px">84</div>
<div class="cl" style="top:626.42px;left:581.00px"><i class="x2">{</i><i class="x2">{</i> <span class="v">form.</span><span class="vi">set_as_default_checkbox</span> <i class="x2">}</i><i class="x2">}</i></div>
<div class="ln" style="top:639.76px">85</div>
<div class="cl" style="top:639.76px;left:581.00px"><i class="x3">&lt;</i>label <span class="a">for</span><i class="x4">=</i><span class="s"><i class="x1">"</i>address_default_address_new<i class="x1">"</i></span> <span class="a">class</span><i class="x4">=</i><span class="s"><i class="x1">"</i>inline<i class="x1">"</i></span><i class="x3">&gt;</i><i class="x2">{</i><i class="x2">{</i> <span class="q">'customer.addresses.set_default'</span><span class="p"> | </span><span class="f">t</span> <i class="x2">}</i><i class="x2">}</i><i class="x3">&lt;</i>/label<i class="x3">&gt;</i></div>
<div class="ln" style="top:653.09px">86</div>
<div class="cl" style="top:653.09px;left:573.50px"><i class="x3">&lt;</i>/p<i class="x3">&gt;</i></div>
<div class="ln" style="top:666.42px">87</div>
<div class="ln" style="top:679.76px">88</div>
<div class="cl" style="top:679.76px;left:573.50px"><i class="x3">&lt;</i>p<i class="x3">&gt;</i><i class="x3">&lt;</i>input <span class="a">type</span><i class="x4">=</i><span class="s"><i class="x1">"</i>submit<i class="x1">"</i></span> <span class="a">class</span><i class="x4">=</i><span class="s"><i class="x1">"</i>btn<i class="x1">"</i></span> <span class="a">value</span><i class="x4">=</i><i class="x1">"</i><i class="x2">{</i><i class="x2">{</i> <span class="q">'customer.addresses.add'</span><span class="p"> | </span><span class="f">t</span> <i class="x2">}</i><i class="x2">}</i><i class="x1">"</i><i class="x3">&gt;</i><i class="x3">&lt;</i>/p<i class="x3">&gt;</i></div>
<div class="ln" style="top:693.09px">89</div>
<div class="cl" style="top:693.09px;left:573.50px"><i class="x3">&lt;</i>p<i class="x3">&gt;</i><i class="x3">&lt;</i>a <span class="a">href</span><i class="x4">=</i><span class="s"><i class="x1">"</i>#<i class="x1">"</i></span> <span class="a">onclick</span><i class="x4">=</i><span class="s"><i class="x1">"</i>Shopify.CustomerAddress.toggleNewForm(); return false;<i class="x1">"</i></span><i class="x3">&gt;</i><i class="x2">{</i><i class="x2">{</i> <span class="q">'customer.addresses.cancel'</span><span class="p"> | </span><span class="f">t</span> <i class="x2">}</i><i class="x2">}</i><i class="x3">&lt;</i>/a<i class="x3">&gt;</i><i class="x3">&lt;</i>/p<i class="x3">&gt;</i></div>
<div class="ln" style="top:706.43px">90</div>
<div class="ln" style="top:719.76px">91</div>
<div class="cl" style="top:719.76px;left:573.50px"><i class="x3">&lt;</i>hr<i class="x3">&gt;</i></div>
<div class="ln" style="top:733.09px">92</div>
<div class="cl" style="top:733.09px;left:566.00px"><i class="x2">{</i>% <span class="k">endform</span> %<i class="x2">}</i></div>
<div class="ln" style="top:746.43px">93</div>
<div class="cl" style="top:746.43px;left:558.50px"><i class="x3">&lt;</i>/div<i class="x3">&gt;</i></div>
<div class="ln" style="top:759.76px">94</div>
<div class="ln" style="top:773.10px">95</div>
<div class="cl" style="top:773.10px;left:558.50px"><i class="x3">&lt;</i>h2 <span class="a">class</span><i class="x4">=</i><span class="s"><i class="x1">"</i>h3<i class="x1">"</i></span><i class="x3">&gt;</i><i class="x2">{</i><i class="x2">{</i> <span class="q">'customer.addresses.title'</span><span class="p"> | </span><span class="f">t</span> <i class="x2">}</i><i class="x2">}</i><i class="x3">&lt;</i>/h2<i class="x3">&gt;</i></div>
<div class="ln" style="top:786.43px">96</div>
<div class="ln" style="top:799.76px">97</div>
<div class="cl" style="top:799.76px;left:558.50px"><i class="x2">{</i>% <span class="k">comment</span> %<i class="x2">}</i></div>
<div class="ln" style="top:813.10px">98</div>
<div class="cl" style="top:813.10px;left:566.00px">List all customer addresses with a unique edit form.</div>
<div class="ln" style="top:826.43px">99</div>
<div class="cl" style="top:826.43px;left:566.00px">Also add pagination in case they have a large number of addresses</div>
<div class="ln" style="top:839.77px">100</div>
<div class="cl" style="top:839.77px;left:558.50px"><i class="x2">{</i>% <span class="k">endcomment</span> %<i class="x2">}</i></div>
<div class="ln" style="top:853.10px">101</div>
<div class="cl" style="top:853.10px;left:558.50px"><i class="x2">{</i>% <span class="k">for</span><span class="v"> address </span><span class="k">in</span><span class="v"> customer.</span><span class="vi">addresses</span> %<i class="x2">}</i></div>
<div class="ln" style="top:866.43px">102</div>
<div class="cl" style="top:866.43px;left:566.00px"><i class="x2">{</i>% <span class="k">if</span><span class="v"> address <i class="x4">=</i><i class="x4">=</i> customer.default_address</span> %<i class="x2">}</i></div>

<!-- annotation -->
<svg class="abs" style="left:735px;top:498px" width="70" height="42" viewBox="735 498 70 42">
  <path d="M800.5 511 C790 505 778 503 768 505.5 C762 507 757 510 752 514.5" fill="none" stroke="#e8432a" stroke-width="4" stroke-linecap="butt"/>
  <path d="M743.2 509 L763.2 520.4 L741.7 534.4 Z" fill="#e8432a"/>
</svg>
<div class="abs" style="left:806px;top:495.5px;font-size:30px;font-weight:bold;color:#e8432a;white-space:nowrap;letter-spacing:0px;-webkit-text-stroke:0.35px #e8432a;text-shadow:0 1px 1.5px rgba(0,0,0,.15)">移動後</div>

<div class="abs" style="left:0;top:862px;width:6px;height:6px;background:radial-gradient(circle at 6px 0,transparent 5.5px,#000 6.5px)"></div>
</body></html>
